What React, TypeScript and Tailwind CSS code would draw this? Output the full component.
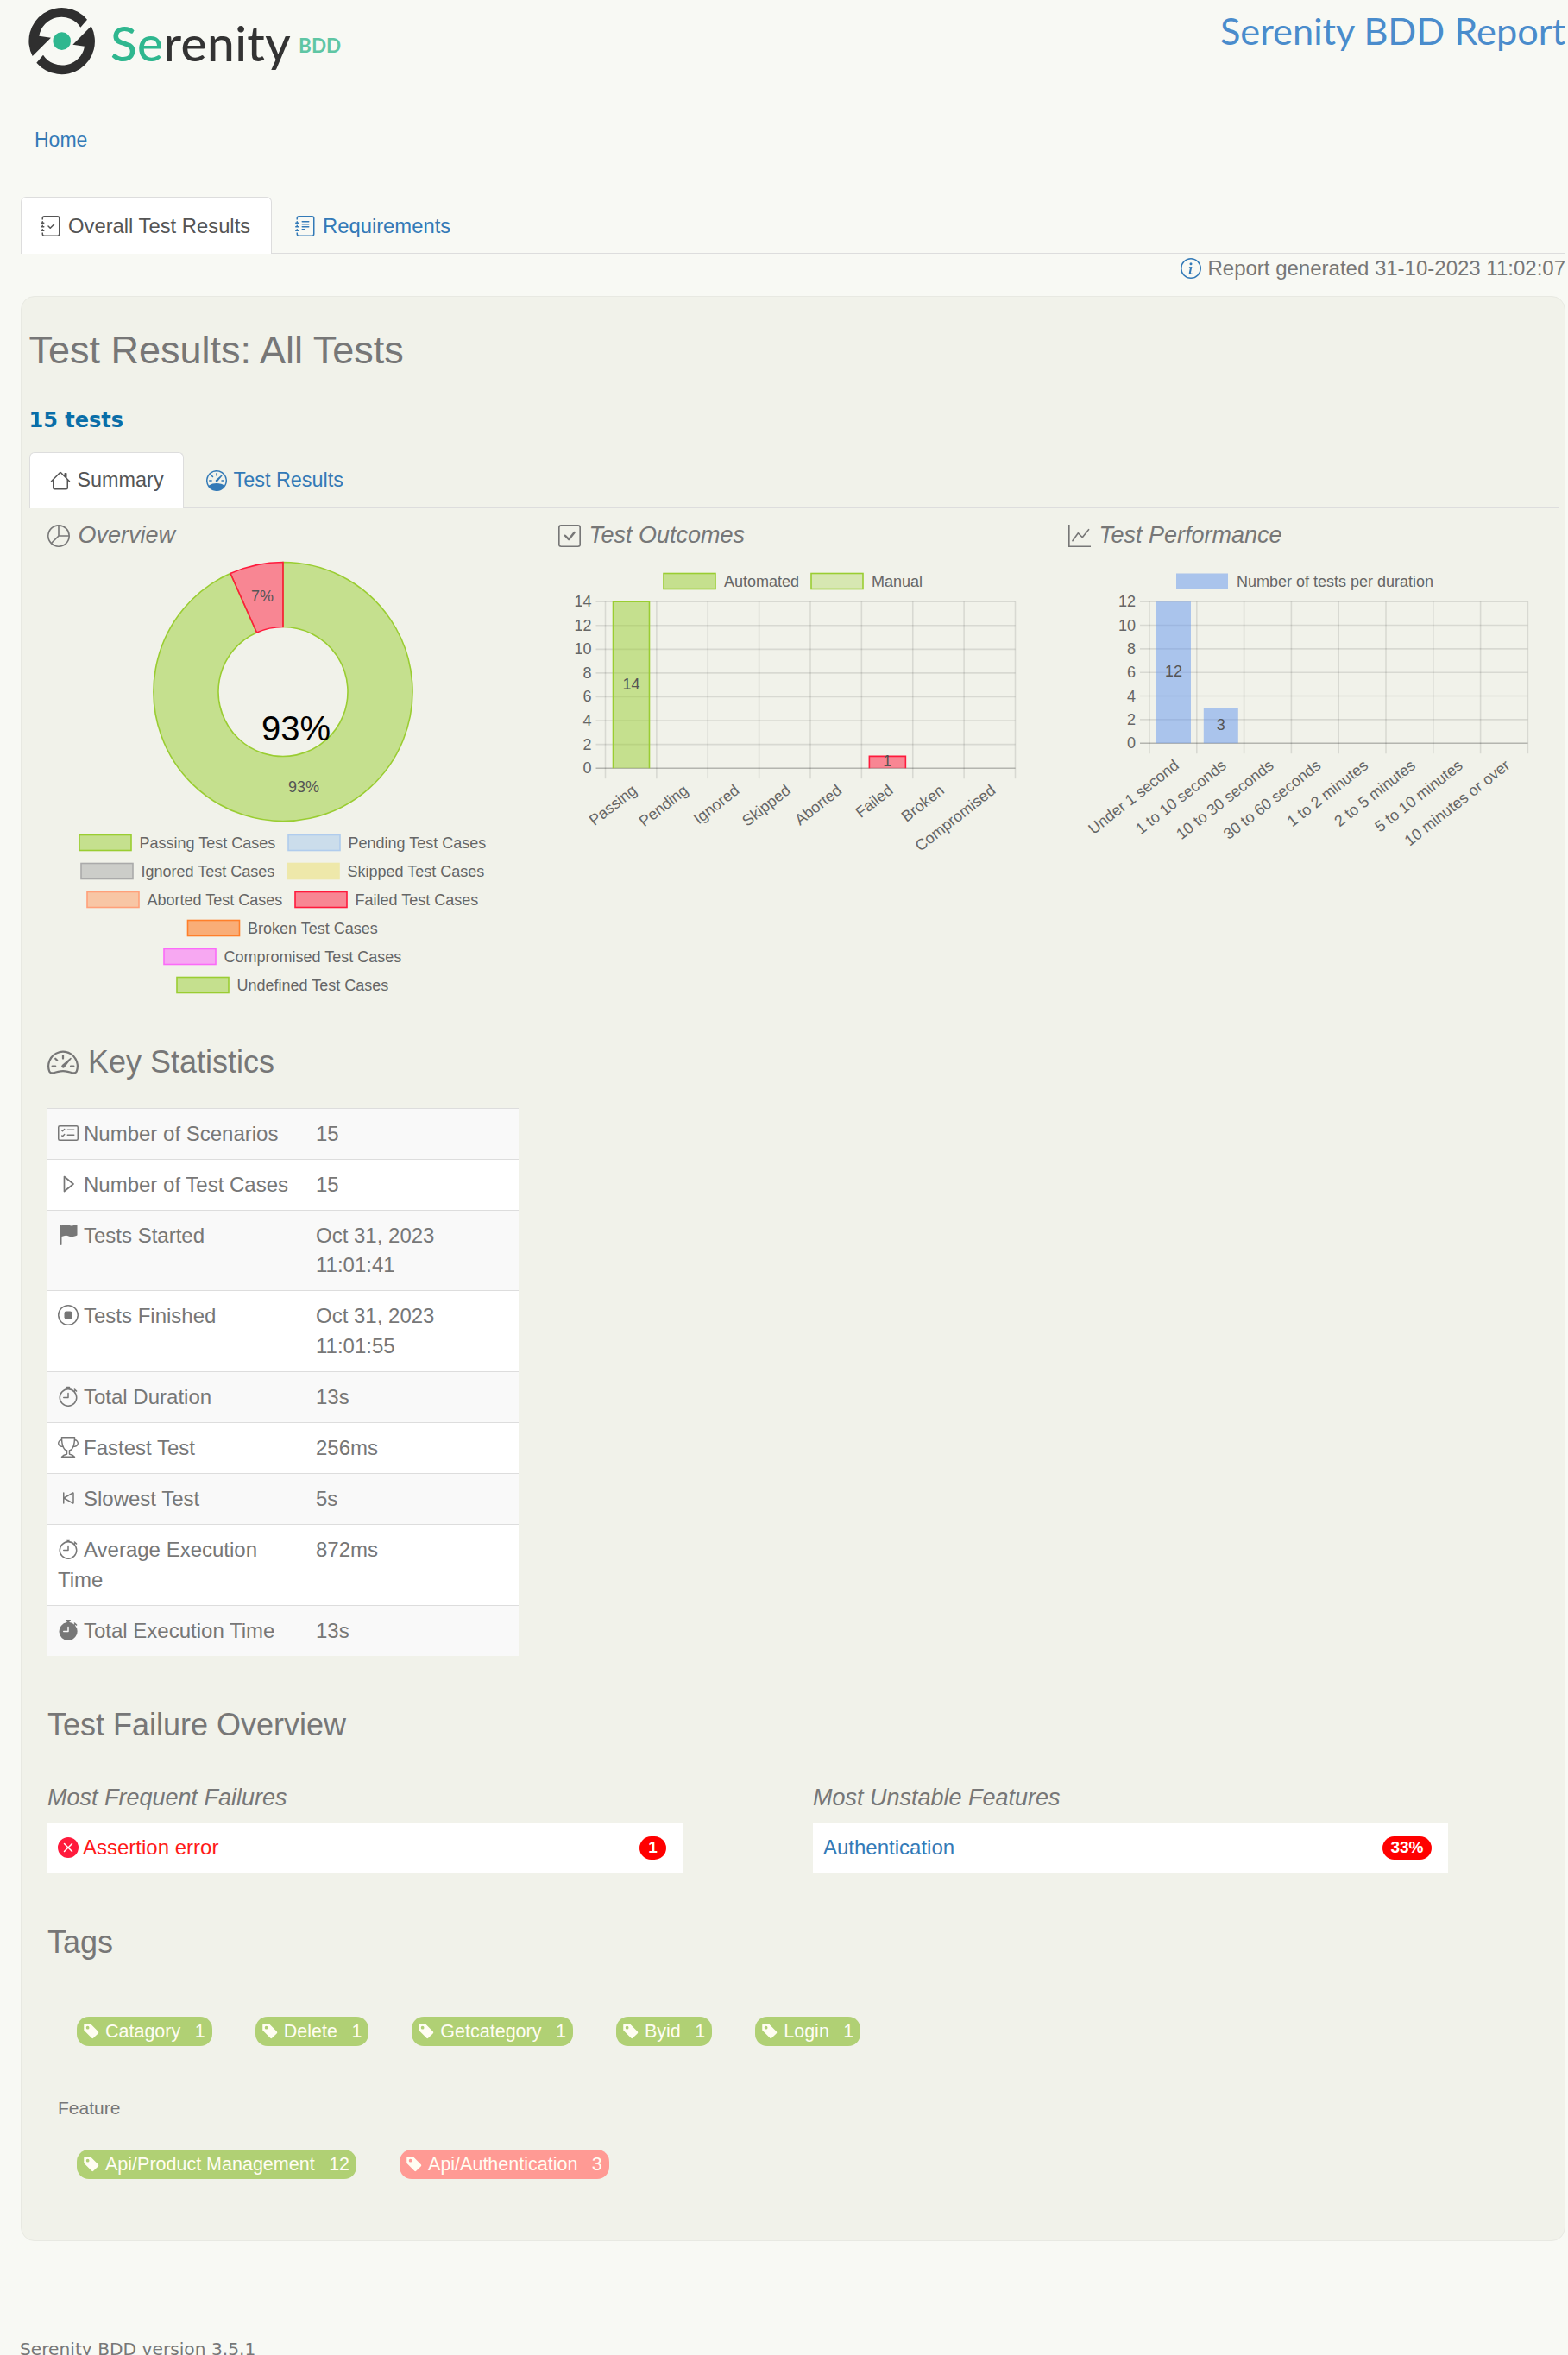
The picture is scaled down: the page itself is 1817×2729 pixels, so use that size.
import React from "react";
import {
  BsCardChecklist,
  BsCheckSquare,
  BsFlagFill,
  BsGraphUp,
  BsHouse,
  BsInfoCircle,
  BsJournalCheck,
  BsJournalText,
  BsPieChart,
  BsSkipStart,
  BsSpeedometer,
  BsSpeedometer2,
  BsStopCircle,
  BsStopwatch,
  BsStopwatchFill,
  BsTagFill,
  BsTrophy,
  BsXCircleFill,
} from "react-icons/bs";

const GREEN = "#9acd32";
const RED = "#ff1a3c";
const BLUE = "#6495ed";
const GRID = "rgba(0,0,0,0.1)";
const ZERO = "rgba(0,0,0,0.25)";
const LABEL = "#666";

function Logo() {
  return (
    <svg width="100" height="90" viewBox="0 0 300 270" className="shrink-0">
      <path
        d="M228 53A115 115 0 0 0 38 180L102 116L61 110A79 79 0 0 1 205 80Z"
        fill="#2f2f2f"
      />
      <path
        d="M52 203A115 115 0 0 0 242 76L178 140L219 146A79 79 0 0 1 75 176Z"
        fill="#2f2f2f"
      />
      <circle cx="140" cy="128" r="31" fill="#2fb78f" />
    </svg>
  );
}

function ringSlice(
  cx: number,
  cy: number,
  outer: number,
  inner: number,
  from: number,
  to: number
) {
  const point = (r: number, deg: number) => {
    const rad = (deg * Math.PI) / 180;
    return `${cx + r * Math.sin(rad)} ${cy - r * Math.cos(rad)}`;
  };
  const large = to - from > 180 ? 1 : 0;
  return `M${point(outer, from)}A${outer} ${outer} 0 ${large} 1 ${point(outer, to)}L${point(inner, to)}A${inner} ${inner} 0 ${large} 0 ${point(inner, from)}Z`;
}

const pieLegend = [
  [
    { x: 92, label: "Passing Test Cases", fill: GREEN, stroke: GREEN, alpha: 0.5 },
    { x: 334, label: "Pending Test Cases", fill: "#a5c8eb", stroke: "#b0cced", alpha: 0.5 },
  ],
  [
    { x: 94, label: "Ignored Test Cases", fill: "#a8a8a8", stroke: "#aaaaaa", alpha: 0.5 },
    { x: 333, label: "Skipped Test Cases", fill: "#eee8aa", stroke: "#eee8aa", alpha: 1 },
  ],
  [
    { x: 101, label: "Aborted Test Cases", fill: "#ff9a60", stroke: "#ffa07a", alpha: 0.5 },
    { x: 342, label: "Failed Test Cases", fill: "#ff1a3c", stroke: RED, alpha: 0.5 },
  ],
  [{ x: 217.5, label: "Broken Test Cases", fill: "#ff7f2a", stroke: "#ff7f2a", alpha: 0.6 }],
  [{ x: 190, label: "Compromised Test Cases", fill: "#fb6bf8", stroke: "#fb6bf8", alpha: 0.55 }],
  [{ x: 205, label: "Undefined Test Cases", fill: GREEN, stroke: GREEN, alpha: 0.5 }],
];

function OverviewChart() {
  return (
    <svg width="592" height="550" viewBox="55 640.5 592 550" className="block">
      <path
        d={ringSlice(328, 801, 150, 75, 0, 336)}
        fill={GREEN}
        fillOpacity="0.5"
        stroke={GREEN}
        strokeWidth="1.6"
      />
      <path
        d={ringSlice(328, 801, 150, 75, 336, 360)}
        fill={RED}
        fillOpacity="0.5"
        stroke={RED}
        strokeWidth="1.6"
      />
      <text x="304" y="696" fontSize="18" fill="#555" textAnchor="middle">7%</text>
      <text x="352" y="917" fontSize="18" fill="#555" textAnchor="middle">93%</text>
      <text x="303" y="857" fontSize="40" fill="#000">93%</text>
      {pieLegend.map((row, i) =>
        row.map((item) => (
          <g key={item.label}>
            <rect
              x={item.x}
              y={967 + i * 33}
              width="60"
              height="18"
              fill={item.fill}
              fillOpacity={item.alpha}
              stroke={item.stroke}
              strokeWidth="1.6"
            />
            <text x={item.x + 69.5} y={982 + i * 33} fontSize="18" fill={LABEL}>
              {item.label}
            </text>
          </g>
        ))
      )}
    </svg>
  );
}

type Bar = { index: number; value: number; fill: string; stroke: string; label: string };

function BarChart({
  originX,
  left,
  right,
  top,
  bottom,
  max,
  labels,
  bars,
  barWidth,
  barOffset,
  legend,
}: {
  originX: number;
  left: number;
  right: number;
  top: number;
  bottom: number;
  max: number;
  labels: string[];
  bars: Bar[];
  barWidth: number;
  barOffset: number;
  legend: { x: number; label: string; alpha: number; stroke: string; fill: string }[];
}) {
  const step = (right - left) / labels.length;
  const ticks = [];
  for (let v = 0; v <= max; v += 2) ticks.push(v);
  const y = (v: number) => bottom - ((bottom - top) * v) / max;

  return (
    <svg width="569" height="550" viewBox={`${originX} 641.5 569 550`} className="block">
      {legend.map((item) => (
        <g key={item.label}>
          <rect
            x={item.x}
            y="665"
            width="60"
            height="18"
            fill={item.fill}
            fillOpacity={item.alpha}
            stroke={item.stroke}
            strokeWidth="1.6"
          />
          <text x={item.x + 70} y="680" fontSize="18" fill={LABEL}>
            {item.label}
          </text>
        </g>
      ))}
      {ticks.map((v) => (
        <g key={v}>
          <line
            x1={left - 11}
            x2={right}
            y1={y(v)}
            y2={y(v)}
            stroke={v === 0 ? ZERO : GRID}
            strokeWidth="1.6"
          />
          <text x={left - 16} y={y(v) + 6} fontSize="18" fill={LABEL} textAnchor="end">
            {v}
          </text>
        </g>
      ))}
      {labels.map((_, i) => (
        <line
          key={i}
          x1={left + i * step}
          x2={left + i * step}
          y1={top}
          y2={bottom + 12}
          stroke={GRID}
          strokeWidth="1.6"
        />
      ))}
      <line x1={right} x2={right} y1={top} y2={bottom + 12} stroke={GRID} strokeWidth="1.6" />
      {bars.map((bar) => {
        const x = left + bar.index * step + barOffset;
        const barTop = y(bar.value);
        return (
          <g key={bar.index}>
            <rect x={x} y={barTop} width={barWidth} height={bottom - barTop} fill={bar.fill} fillOpacity="0.5" />
            <path
              d={`M${x} ${bottom}V${barTop}H${x + barWidth}V${bottom}`}
              fill="none"
              stroke={bar.stroke}
              strokeWidth="1.6"
            />
            <text
              x={x + barWidth / 2}
              y={(barTop + bottom) / 2 + 5}
              fontSize="18"
              fill="#555"
              textAnchor="middle"
            >
              {bar.label}
            </text>
          </g>
        );
      })}
      {labels.map((label, i) => {
        const x = left + (i + 0.5) * step + 8;
        const ly = bottom + 28;
        return (
          <text
            key={label}
            x={x}
            y={ly}
            fontSize="18"
            fill={LABEL}
            textAnchor="end"
            transform={`rotate(-38 ${x} ${ly})`}
          >
            {label}
          </text>
        );
      })}
    </svg>
  );
}

function SectionTitle({ icon, title }: { icon: React.ReactNode; title: string }) {
  return (
    <div className="flex h-[40px] items-center gap-[9.5px] text-[27px] italic text-[#777]">
      {icon}
      <span>{title}</span>
    </div>
  );
}

const statIcon = "mr-[6px] inline-block align-[-3px] text-[#777]";

// the bootstrap play glyph is too squat next to the reference
function PlayOutline() {
  return (
    <svg width="24" height="24" viewBox="0 0 24 24" className={statIcon}>
      <path d="M7.5 3.5L18 12L7.5 20.5Z" fill="none" stroke="#777" strokeWidth="1.7" strokeLinejoin="round" />
    </svg>
  );
}

const stats: { icon: React.ReactNode; label: string; value: React.ReactNode }[] = [
  { icon: <BsCardChecklist size={24} className={statIcon} />, label: "Number of Scenarios", value: "15" },
  { icon: <PlayOutline />, label: "Number of Test Cases", value: "15" },
  { icon: <BsFlagFill size={24} className={statIcon} />, label: "Tests Started", value: "Oct 31, 2023 11:01:41" },
  { icon: <BsStopCircle size={24} className={statIcon} />, label: "Tests Finished", value: "Oct 31, 2023 11:01:55" },
  { icon: <BsStopwatch size={24} className={statIcon} />, label: "Total Duration", value: "13s" },
  { icon: <BsTrophy size={24} className={statIcon} />, label: "Fastest Test", value: "256ms" },
  { icon: <BsSkipStart size={24} className={statIcon} />, label: "Slowest Test", value: "5s" },
  { icon: <BsStopwatch size={24} className={statIcon} />, label: "Average Execution Time", value: "872ms" },
  { icon: <BsStopwatchFill size={24} className={statIcon} />, label: "Total Execution Time", value: "13s" },
];

function Tag({ label, count, failed }: { label: string; count: number; failed?: boolean }) {
  return (
    <span
      className={`flex h-[34px] items-center rounded-[14px] pl-[7px] pr-[8px] text-[21.5px] text-[#fffdf2] ${
        failed ? "bg-[#ff9a94]" : "bg-[#b0d074]"
      }`}
    >
      <BsTagFill size={20} className="mr-[6px] shrink-0 text-[#fffdf2]" />
      <span>{label}</span>
      <span className="ml-[16.5px]">{count}</span>
    </span>
  );
}

export default function App() {
  return (
    <div className="h-[2729px] overflow-hidden bg-[#f8f9f4] font-['Liberation_Sans',Arial,sans-serif] text-[24px] text-[#777]">
      <header className="flex h-[140px] items-start justify-between pr-[3px]">
        <div className="ml-[25px] mt-[5px] flex items-start">
          <Logo />
          <span className="ml-[3px] mt-[9px] font-['Lato',sans-serif] text-[56.7px] font-medium leading-[70px] tracking-[0.4px] text-[#333]">
            <span className="text-[#2fb78f]">Se</span>renity
          </span>
          <span className="ml-[9px] mt-[33px] font-['Lato',sans-serif] text-[22.5px] font-bold leading-[30px] text-[#5fc6a4]">
            BDD
          </span>
        </div>
        <div className="mt-[5px] font-['Lato',sans-serif] text-[43.3px] leading-[60px] text-[#4a8ccc]">
          Serenity BDD Report
        </div>
      </header>

      <nav className="flex h-[44px] items-center pl-[40px] text-[23px] text-[#337ab7]">
        <a>Home</a>
      </nav>

      <div className="ml-[24px] mr-[3px] mt-[44px] flex h-[66px] items-end border-b border-[#ddd] text-[23.8px]">
        <div className="mb-[-1px] flex h-[66px] w-[291px] items-center gap-[8px] rounded-t-[6px] border border-b-0 border-[#ddd] bg-white pl-[22px] text-[#555]">
          <BsJournalCheck size={24} />
          <span>Overall Test Results</span>
        </div>
        <div className="flex h-[65px] items-center gap-[8px] pl-[27px] pt-[2px] text-[#337ab7]">
          <BsJournalText size={24} />
          <span>Requirements</span>
        </div>
      </div>

      <div className="flex h-[49px] items-start justify-end pr-[3px] pt-[1px]">
        <div className="flex h-[32px] items-center gap-[7px]">
          <BsInfoCircle size={24} className="text-[#337ab7]" />
          <span>Report generated 31-10-2023 11:02:07</span>
        </div>
      </div>

      <main className="ml-[24px] mr-[3px] h-[2254px] rounded-[16px] border border-[#e8e9e2] bg-[#f1f2ea] pl-[8.5px] pr-[6px]">
        <h1 className="mt-[38px] h-[48px] text-[45px] leading-[48px] text-[#777]">
          Test Results: All Tests
        </h1>
        <div className="mt-[40px] h-[34px] font-['DejaVu_Sans',sans-serif] text-[24px] font-bold leading-[34px] text-[#0a6ea8]">
          15 tests
        </div>

        <div className="mt-[20px] flex h-[65px] items-end border-b border-[#ddd] text-[23.4px]">
          <div className="mb-[-1px] flex h-[65px] w-[179px] items-center gap-[8px] rounded-t-[6px] border border-b-0 border-[#ddd] bg-white pl-[23px] text-[#555]">
            <BsHouse size={24} />
            <span>Summary</span>
          </div>
          <div className="flex h-[64px] items-center gap-[8px] pl-[26px] pt-[2px] text-[#337ab7]">
            <BsSpeedometer size={24} />
            <span>Test Results</span>
          </div>
        </div>

        <section className="grid grid-cols-[592px_591px_569px] pl-[21.5px] pt-[11.5px]">
          <div>
            <SectionTitle icon={<BsPieChart size={26} />} title="Overview" />
            <OverviewChart />
          </div>
          <div>
            <SectionTitle icon={<BsCheckSquare size={26} />} title="Test Outcomes" />
            <BarChart
              originX={647}
              left={701.5}
              right={1176.5}
              top={697.7}
              bottom={890.7}
              max={14}
              labels={["Passing", "Pending", "Ignored", "Skipped", "Aborted", "Failed", "Broken", "Compromised"]}
              barWidth={42}
              barOffset={9}
              bars={[
                { index: 0, value: 14, fill: GREEN, stroke: GREEN, label: "14" },
                { index: 5, value: 1, fill: RED, stroke: RED, label: "1" },
              ]}
              legend={[
                { x: 769, label: "Automated", alpha: 0.5, stroke: GREEN, fill: GREEN },
                { x: 940, label: "Manual", alpha: 0.3, stroke: GREEN, fill: GREEN },
              ]}
            />
          </div>
          <div>
            <SectionTitle icon={<BsGraphUp size={26} />} title="Test Performance" />
            <BarChart
              originX={1238}
              left={1332}
              right={1770.4}
              top={697.7}
              bottom={861.7}
              max={12}
              labels={[
                "Under 1 second",
                "1 to 10 seconds",
                "10 to 30 seconds",
                "30 to 60 seconds",
                "1 to 2 minutes",
                "2 to 5 minutes",
                "5 to 10 minutes",
                "10 minutes or over",
              ]}
              barWidth={40}
              barOffset={8}
              bars={[
                { index: 0, value: 12, fill: BLUE, stroke: "none", label: "12" },
                { index: 1, value: 3, fill: BLUE, stroke: "none", label: "3" },
              ]}
              legend={[{ x: 1363, label: "Number of tests per duration", alpha: 0.5, stroke: "none", fill: BLUE }]}
            />
          </div>
        </section>

        <section className="pl-[21.5px] pt-[10.5px]">
          <h2 className="flex h-[60px] items-center gap-[11px] text-[36px] text-[#777]">
            <BsSpeedometer2 size={36} />
            <span>Key Statistics</span>
          </h2>
          <table className="mt-[22.5px] w-[546px] border-collapse bg-white text-[24px] leading-[34.2px] text-[#777]">
            <tbody>
              {stats.map((row, i) => (
                <tr key={row.label} className={`border-t border-[#ddd] ${i % 2 === 0 ? "bg-[#f9f9f9]" : "bg-white"}`}>
                  <td className="w-[299px] px-[12px] py-[12px] align-top">
                    {row.icon}
                    {row.label}
                  </td>
                  <td className="px-[12px] py-[12px] align-top">
                    <div className="w-[170px]">{row.value}</div>
                  </td>
                </tr>
              ))}
            </tbody>
          </table>

          <h2 className="mt-[56px] h-[48px] text-[36px] leading-[48px] text-[#777]">Test Failure Overview</h2>
          <div className="mt-[40px] grid grid-cols-[887px_736px]">
            <div>
              <h3 className="h-[40px] text-[27px] italic leading-[40px] text-[#777]">Most Frequent Failures</h3>
              <div className="mt-[9px] flex h-[58px] w-[736px] items-center justify-between border-t border-[#ddd] bg-white pl-[12px] pr-[19px]">
                <span className="flex items-center gap-[5px] text-[#ff1a1a]">
                  <BsXCircleFill size={24} className="text-[#ff1a3c]" />
                  Assertion error
                </span>
                <span className="flex h-[27px] w-[31px] items-center justify-center rounded-full bg-[#ff0000] text-[19px] font-bold text-white">
                  1
                </span>
              </div>
            </div>
            <div>
              <h3 className="h-[40px] text-[27px] italic leading-[40px] text-[#777]">Most Unstable Features</h3>
              <div className="mt-[9px] flex h-[58px] items-center justify-between border-t border-[#ddd] bg-white pl-[12px] pr-[19px]">
                <span className="text-[#337ab7]">Authentication</span>
                <span className="flex h-[27px] w-[57px] items-center justify-center rounded-[16px] bg-[#ff0000] text-[19px] font-bold text-white">
                  33%
                </span>
              </div>
            </div>
          </div>

          <h2 className="mt-[57px] h-[48px] text-[36px] leading-[48px] text-[#777]">Tags</h2>
          <div className="ml-[34px] mt-[62px] flex gap-[50px]">
            <Tag label="Catagory" count={1} />
            <Tag label="Delete" count={1} />
            <Tag label="Getcategory" count={1} />
            <Tag label="Byid" count={1} />
            <Tag label="Login" count={1} />
          </div>
          <div className="ml-[12px] mt-[56.5px] h-[32px] text-[21px] leading-[32px]">Feature</div>
          <div className="ml-[34px] mt-[31.5px] flex gap-[50px]">
            <Tag label="Api/Product Management" count={12} />
            <Tag label="Api/Authentication" count={3} failed />
          </div>
        </section>
      </main>

      <footer className="ml-[23px] mt-[110px] font-['DejaVu_Sans',sans-serif] text-[20.2px] leading-[30px] text-[#777]">
        Serenity BDD version 3.5.1
      </footer>
    </div>
  );
}
